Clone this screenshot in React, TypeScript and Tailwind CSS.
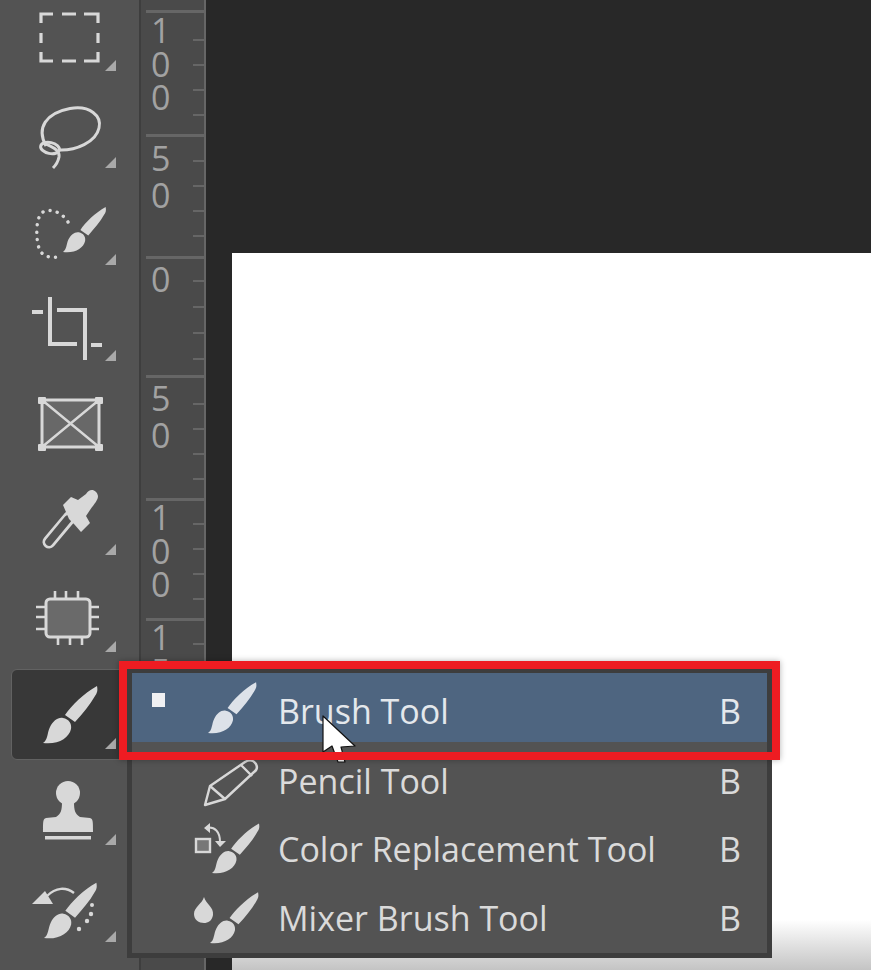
import React from "react";

const C = "#d8d8d8";

function Brush({ x, y, s = 1, fill = C }: { x: number; y: number; s?: number; fill?: string }) {
  return (
    <g transform={`translate(${x} ${y}) scale(${s})`} fill={fill}>
      <path d="M54,-57 C55,-52 54,-50 52,-47 C47,-38 40,-30 32,-21 L22,-28 C28,-37 41,-50 54,-57Z" />
      <path d="M20,-25 C26,-24 29,-19 28,-14 C26,-5 15,2 0,0 C5,-3 4,-10 7,-16 C10,-22 15,-26 20,-25Z" />
    </g>
  );
}

function Marquee() {
  return (
    <g fill="none" stroke={C} strokeWidth="3.200">
      <path d="M41,23 V14 H53 M62,14 H76 M84,14 H98 V23 M41,33 V43 M98,33 V43 M41,52 V61 H53 M62,61 H76 M84,61 H98 V52" />
    </g>
  );
}
function Lasso() {
  return (
    <g fill="none" stroke={C} strokeWidth="3">
      <path d="M46,146 C36,128 46,113 70,108.500 C90,105 102,116 99,128 C96,142 76,151 58,150" />
      <ellipse cx="50" cy="148" rx="9.500" ry="5.500" transform="rotate(12 50 148)" />
      <path d="M46,144 C52,147 60,150 59,157 C58,162 56,165 53,168" />
    </g>
  );
}
function QuickSelect() {
  return (
    <g>
      <path
        d="M68,222 C62,212 50,208 43,212 C35,217 36,240 39,248 C42,257 50,258 60,257"
        fill="none"
        stroke={C}
        strokeWidth="3.400"
        strokeLinecap="round"
        strokeDasharray="0.100 7.200"
      />
      <Brush x={63} y={252} s={0.79} />
    </g>
  );
}
function Crop() {
  return (
    <path
      d="M50,297 V344 H77 M32,312 H43 M57,310 H85 V360 M91,345 H102"
      fill="none"
      stroke={C}
      strokeWidth="4"
    />
  );
}
function Frame() {
  return (
    <g>
      <rect x="42" y="400" width="57" height="47" fill="#686868" stroke={C} strokeWidth="3" />
      <path d="M42,400 L99,447 M99,400 L42,447" stroke={C} strokeWidth="2.400" />
      {[
        [38, 397],
        [95, 397],
        [38, 444],
        [95, 444],
      ].map(([x, y]) => (
        <rect key={`${x}-${y}`} x={x} y={y} width="8" height="7" rx="1" fill={C} />
      ))}
    </g>
  );
}
function Dropper() {
  return (
    <g>
      <path d="M49,542 L70,517" stroke={C} strokeWidth="13" strokeLinecap="round" />
      <path d="M49,542 L68,519" stroke="#535353" strokeWidth="7.500" strokeLinecap="round" />
      <path d="M63,505 L71,497 L78,500 L86,494 C90,487 97,490 98,496 C98,500 95,503 90,510 L86,516 L90,523 L81,532 L74,524 L69,519 Z" fill={C} />
    </g>
  );
}
function Patch() {
  return (
    <g>
      <path
        d="M55,591 V600 M66,591 V600 M78,591 V600 M58,636 V645 M70,636 V645 M82,636 V645 M36,607 H46 M36,617 H46 M36,629 H46 M90,607 H99 M90,617 H99 M90,629 H99"
        stroke={C}
        strokeWidth="2.600"
      />
      <rect x="46" y="599" width="44" height="38" rx="4" fill="#6a6a6a" stroke={C} strokeWidth="3" />
    </g>
  );
}
function Stamp() {
  return (
    <g fill={C}>
      <circle cx="68" cy="793" r="12" />
      <path d="M62,802 H74 C74,810 75,814 80,817 L90,818 C93,819 93,821 93,832 H43 C43,821 43,819 46,818 L56,817 C61,814 62,810 62,802Z" />
      <rect x="45" y="836" width="46" height="3.500" />
    </g>
  );
}
function History() {
  return (
    <g fill={C}>
      <Brush x={44} y={938} s={0.97} />
      <path d="M32,904 L53,904 L45,891Z" />
      <path d="M47,896 C56,887 66,887 74,893" fill="none" stroke={C} strokeWidth="2.400" />
      <circle cx="92" cy="905" r="2" />
      <circle cx="91" cy="914" r="2.200" />
      <circle cx="87" cy="921" r="2.200" />
      <circle cx="79" cy="929" r="2.200" />
    </g>
  );
}

const tools: { top: number; el: React.ReactNode; tri?: boolean; selected?: boolean }[] = [
  { top: -9, el: <Marquee />, tri: true },
  { top: 88, el: <Lasso />, tri: true },
  { top: 185, el: <QuickSelect />, tri: true },
  { top: 281, el: <Crop />, tri: true },
  { top: 378, el: <Frame /> },
  { top: 475, el: <Dropper />, tri: true },
  { top: 572, el: <Patch />, tri: true },
  { top: 669, el: <Brush x={43} y={743} />, tri: true, selected: true },
  { top: 765, el: <Stamp />, tri: true },
  { top: 862, el: <History />, tri: true },
];

function Tool({ top, el, tri, selected }: { top: number; el: React.ReactNode; tri?: boolean; selected?: boolean }) {
  return (
    <div
      className={
        selected
          ? "h-[91px] w-[116px] shrink-0 rounded-[6px] border border-[#626262] bg-[#383838]"
          : "h-[91px] w-[116px] shrink-0 border border-transparent"
      }
    >
      <svg width="114" height="89" viewBox={`12 ${top + 1} 114 89`} className="block overflow-visible">
        {el}
        {tri && <path d={`M105,${top + 80} H116 V${top + 69}Z`} fill="#a9a9a9" />}
      </svg>
    </div>
  );
}

const sections = [
  { text: "1\n0\n0", h: 124, digits: "pt-[1px] leading-[33.500px]", ticks: "gap-[23px] pt-[26px]" },
  { text: "5\n0", h: 122, digits: "pt-[3px] leading-[37px]", ticks: "gap-[23px] pt-[23px]" },
  { text: "0", h: 119, digits: "pt-[2px] leading-[37px]", ticks: "gap-[24px] pt-[21px]" },
  { text: "5\n0", h: 123, digits: "pt-[2px] leading-[37px]", ticks: "gap-[23px] pt-[25px]" },
  { text: "1\n0\n0", h: 120, digits: "pt-[0px] leading-[33.500px]", ticks: "gap-[23px] pt-[22px]" },
  { text: "1\n5\n0", h: 124, digits: "pt-[0px] leading-[33.500px]", ticks: "gap-[23px] pt-[22px]" },
  { text: "2", h: 120, digits: "pt-[0px] leading-[34px]", ticks: "gap-[23px] pt-[22px]" },
];

function RulerSection({ text, h, digits, ticks }: { text: string; h: number; digits: string; ticks: string }) {
  return (
    <div className="flex shrink-0 border-t-[3px] border-[#666666]" style={{ height: h }}>
      <div className={`w-[47px] whitespace-pre-line pl-[5px] text-[34px] text-[#a2a2a2] ${digits}`}>{text}</div>
      <div className={`flex flex-1 flex-col ${ticks}`}>
        {[0, 1, 2, 3].map((i) => (
          <div key={i} className="h-[2px] w-full shrink-0 bg-[#666666]" />
        ))}
      </div>
    </div>
  );
}

const items: { label: string; rowTop: number; icon: React.ReactNode; active?: boolean; pad: string }[] = [
  { label: "Brush Tool", rowTop: 673, active: true, pad: "pt-[6px]", icon: <Brush x={208} y={733} s={0.89} fill="#dde2e9" /> },
  {
    label: "Pencil Tool",
    rowTop: 742,
    pad: "pt-[8px]",
    icon: (
      <g fill="none" stroke={C} strokeWidth="2.400" strokeLinejoin="round">
        <path d="M205,805 L210,786 L245,762 C250,759 254,761 256,764 C258,768 257,770 254,772 L225,799 Z" />
        <path d="M210,786 L225,799 M241,765 L252,776" />
      </g>
    ),
  },
  {
    label: "Color Replacement Tool",
    rowTop: 811,
    pad: "pt-[7px]",
    icon: (
      <g>
        <rect x="196" y="839" width="14" height="13" fill="#777777" stroke={C} strokeWidth="2.400" />
        <path d="M206,828 C215,826 220,832 220,842" fill="none" stroke={C} strokeWidth="2" />
        <path d="M210,823 L204,828 L210,833Z M215,841 H226 L220,847Z" fill={C} />
        <Brush x={212} y={873} s={0.87} />
      </g>
    ),
  },
  {
    label: "Mixer Brush Tool",
    rowTop: 880,
    pad: "pt-[7px]",
    icon: (
      <g>
        <path d="M204,897 C206,904 214,907 213,915 C212,921 208,923 204,923 C199,923 194,920 194,914 C194,907 202,904 204,897Z" fill={C} />
        <Brush x={210} y={943} s={0.89} />
      </g>
    ),
  },
];

export default function App() {
  return (
    <div
      className="relative flex h-[970px] w-[871px] overflow-hidden bg-[#282828]"
      style={{ fontFamily: '"Open Sans", "Noto Sans", sans-serif' }}
    >
      {/* tool strip */}
      <div className="flex h-full w-[139px] shrink-0 flex-col overflow-hidden bg-[#535353] pl-[11px]">
        <div className="-mt-[9px] flex flex-col gap-[5.800px]">
          {tools.map((t) => (
            <Tool key={t.top} {...t} />
          ))}
        </div>
      </div>

      {/* divider + ruler */}
      <div className="w-[2px] shrink-0 bg-[#3e3e3e]" />
      <div className="flex h-full w-[65px] shrink-0 flex-col overflow-hidden border-r-2 border-[#666666] bg-[#4a4a4a] pl-[5px] pt-[10px]">
        {sections.map((s, i) => (
          <RulerSection key={i} {...s} />
        ))}
      </div>

      {/* canvas */}
      <div className="flex h-full flex-1 flex-col pl-[26px] pt-[253px]">
        <div className="flex flex-1 flex-col bg-white">
          <div className="flex-1" />
          <div className="h-[50px] bg-gradient-to-b from-white to-[#c4c4c4]" />
        </div>
      </div>

      {/* flyout menu */}
      <div className="absolute left-[127px] top-[669px] flex w-[645px] flex-col border-[5px] border-t-[4px] border-[#3d3d3d] bg-[#535353] pb-[4px]">
        {items.map((it) => (
          <div
            key={it.label}
            className={
              it.active
                ? "flex h-[69px] items-center bg-[#4e6580] text-[#e4e8ec]"
                : "flex h-[69px] items-center text-[#dadada]"
            }
          >
            <div className="h-full w-[48px] shrink-0 pl-[20px] pt-[20px]">
              {it.active && <div className="h-[14px] w-[13px] bg-[#f0f0f2]" />}
            </div>
            <svg width="90" height="69" viewBox={`180 ${it.rowTop} 90 69`} className="block shrink-0 overflow-visible">
              {it.icon}
            </svg>
            <div className={`ml-[8px] flex-1 text-[34px] leading-[44px] ${it.pad}`}>{it.label}</div>
            <div className={`mr-[26px] text-[34px] leading-[44px] ${it.pad}`}>B</div>
          </div>
        ))}
      </div>

      {/* pointer */}
      <svg className="absolute left-[318px] top-[711px]" width="44" height="56" viewBox="318 711 44 56">
        <path
          d="M323,716 V752 L332,746 L338,762 L345,762 L341,747 L355,746 Z"
          fill="#ffffff"
          stroke="#111111"
          strokeWidth="1.200"
          strokeLinejoin="round"
        />
      </svg>

      {/* red annotation */}
      <div className="absolute left-[119px] top-[661px] h-[99px] w-[661px] border-[8px] border-[#ee1c22] shadow-[0_0_6px_rgba(0,0,0,0.3)]" />
    </div>
  );
}
